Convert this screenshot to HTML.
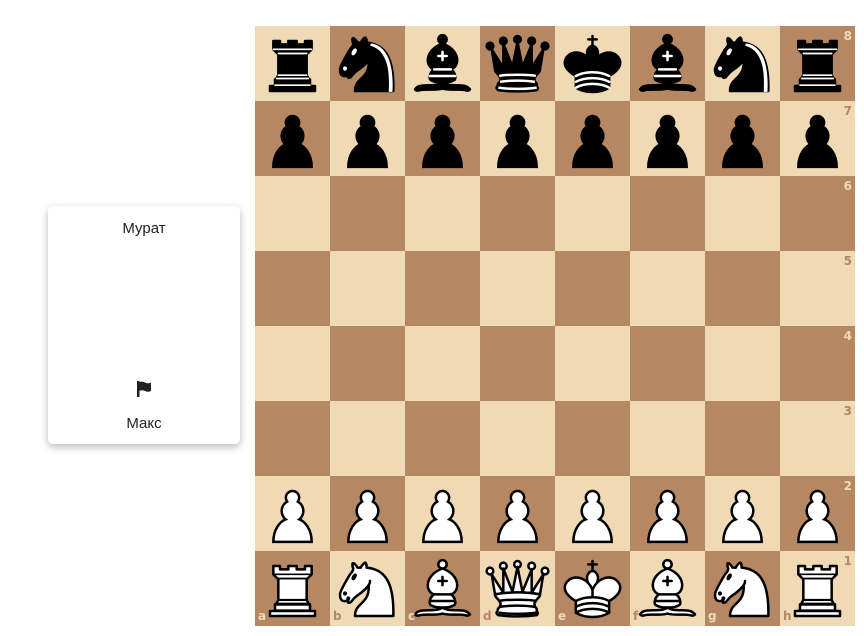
<!DOCTYPE html>
<html><head><meta charset="utf-8"><style>
body{margin:0;width:864px;height:636px;background:#fff;position:relative;overflow:hidden;font-family:"Liberation Sans",sans-serif}
.card{position:absolute;left:48px;top:206px;width:192px;height:238px;background:#fff;border-radius:5px;box-shadow:0 3px 8px rgba(0,0,0,.28)}
.card .n{position:absolute;width:100%;text-align:center;font-size:15px;color:#222}
.board{position:absolute;left:255px;top:26px;width:600px;height:600px;display:grid;grid-template-columns:repeat(8,75px);grid-template-rows:repeat(8,75px)}
.board div{position:relative}
.l{background:#f0d9b5}.d{background:#b58863}
.board svg{position:absolute;left:0;top:0;width:75px;height:75px}
svg.w{fill:#fff;color:#000}svg.b{fill:#000;color:#fff}
.r,.f{position:absolute;font-size:12px;font-weight:bold;font-family:"DejaVu Sans",sans-serif}
.r{right:3px;top:3px}.f{left:3px;bottom:3px}
.l .r,.l .f{color:#b58863}.d .r,.d .f{color:#f0d9b5}
</style></head><body>
<div class="card">
<div class="n" style="top:14px">Мурат</div>
<svg style="position:absolute;left:89px;top:175px" width="14" height="16" viewBox="0 0 14 16"><rect x="0" y="0" width="2.5" height="16" fill="#222"/><path d="M2 1 Q6 0 8 1.5 Q11 3 14 1.5 V10 Q11 11.5 8 10 Q5 8.5 2 10Z" fill="#222"/></svg>
<div class="n" style="top:209px">Макс</div>
</div>
<svg width="0" height="0" style="position:absolute"><defs>
<g id="p" stroke="#000" stroke-width="1.5" stroke-linecap="round"><path d="M22.5 9c-2.21 0-4 1.79-4 4 0 .89.29 1.710.78 2.38C17.33 16.5 16 18.59 16 21c0 2.030.94 3.84 2.41 5.03C15.41 27.09 11 31.58 11 39.5H34c0-7.92-4.41-12.41-7.41-13.47C28.060 24.84 29 23.03 29 21c0-2.41-1.33-4.5-3.28-5.62.49-.67.78-1.49.78-2.38 0-2.21-1.79-4-4-4z"/></g>
<g id="r" stroke="#000" stroke-width="1.5" stroke-linecap="round" stroke-linejoin="round"><path d="M9 39h27v-3H9v3zM12 36v-4h21v4H12zM11 14V9h4v2h5V9h5v2h5V9h4v5" stroke-linecap="butt"/><path d="M34 14l-3 3H14l-3-3"/><path d="M31 17v12.5H14V17" stroke-linecap="butt"/><path d="M31 29.5l1.5 2.5h-20l1.5-2.5"/><path d="M12 35.5h21M13 31.5h19M14 29.5h17M14 16.5h17M11 14h23" fill="none" stroke="currentColor" stroke-width="1"/></g>
<g id="n" stroke="#000" stroke-width="1.5" stroke-linecap="round" stroke-linejoin="round"><path d="M22 10c10.5 1 16.5 8 16 29H15c0-9 10-6.5 8-21"/><path d="M24 18c.38 2.91-5.55 7.37-8 9-3 2-2.82 4.34-5 4-1.042-.94 1.41-3.04 0-3-1 0 .19 1.23-1 2-1 0-4.003 1-4-4 0-2 6-12 6-12s1.89-1.9 2-3.5c-.73-.994-.5-2-.5-3 1-1 3 2.5 3 2.5h2s.78-1.992 2.5-3c1 0 1 3 1 3"/><path d="M9.5 25.5a.5.5 0 1 1-1 0 .5.5 0 1 1 1 0z" fill="currentColor" stroke="currentColor"/><path d="M15 15.5a.5 1.5 0 1 1-1 0 .5 1.5 0 1 1 1 0z" transform="rotate(30 14.5 15.5)" fill="currentColor" stroke="currentColor"/></g>
<path id="mane" d="M24.55 10.4l-.45 1.45.5.15c3.15 1 5.65 2.49 7.9 6.75S35.75 29.06 35.25 39l-.05.5h2.25l.05-.5c.5-10.06-.88-16.85-3.25-21.34-2.37-4.49-5.79-6.64-9.19-7.16l-.51-.1z" fill="#fff"/>
<g id="b" stroke="#000" stroke-width="1.5" stroke-linecap="round" stroke-linejoin="round"><path d="M9 36c3.39-.97 10.11.43 13.5-2 3.39 2.43 10.11 1.03 13.5 2 0 0 1.65.54 3 2-.68.97-1.65.99-3 .5-3.39-.97-10.11.46-13.5-1-3.39 1.46-10.11.03-13.5 1-1.354.49-2.323.47-3-.5 1.354-1.94 3-2 3-2z"/><path d="M15 32c2.5 2.5 12.5 2.5 15 0 .5-1.5 0-2 0-2 0-2.5-2.5-4-2.5-4 5.5-1.5 6-11.5-5-15.5-11 4-10.5 14-5 15.5 0 0-2.5 1.5-2.5 4 0 0-.5.5 0 2z"/><path d="M25 8a2.5 2.5 0 1 1-5 0 2.5 2.5 0 1 1 5 0z"/><path d="M17.5 26h10M15 30h15m-7.5-14.5v5M20 18h5" fill="none" stroke="currentColor"/></g>
<g id="q" stroke="#000" stroke-width="1.5" stroke-linejoin="round"><circle cx="6" cy="12" r="2"/><circle cx="14" cy="9" r="2"/><circle cx="22.5" cy="8" r="2"/><circle cx="31" cy="9" r="2"/><circle cx="39" cy="12" r="2"/><path d="M9 26c8.5-1.5 21-1.5 27 0l2-12-7 11V11l-5.5 13.5-3-15-3 15-5.5-14V25L7 14l2 12z" stroke-linecap="butt"/><path d="M9 26c0 2 1.5 2 2.5 4 1 1.5 1 1 .5 3.5-1.5 1-1.5 2.5-1.5 2.5-1.5 1.5.5 2.5.5 2.5 6.5 1 16.5 1 23 0 0 0 1.5-1 0-2.5 0 0 .5-1.5-1-2.5-.5-2.5-.5-2 .5-3.5 1-2 2.5-2 2.5-4-8.5-1.5-18.5-1.5-27 0z"/><path d="M11.5 30c3.5-1 18.5-1 22 0M12 33.5c6-1 15-1 21 0M11 37c6 1 17 1 23 0" fill="none" stroke="currentColor"/></g>
<g id="k" stroke="#000" stroke-width="1.5" stroke-linecap="round" stroke-linejoin="round"><path d="M22.5 11.63V6M20 8h5" fill="none"/><path d="M22.5 25s4.5-7.5 3-10.5c0 0-1-2.5-3-2.5s-3 2.5-3 2.5c-1.5 3 3 10.5 3 10.5" stroke-linecap="butt"/><path d="M12.5 37c5.5 3.5 14.5 3.5 20 0v-7s9-4.5 6-10.5c-4-6.5-13.5-3.5-16 4V27v-3.5c-2.5-7.5-12-10.5-16-4-3 6 6 10.5 6 10.5v7"/><path d="M12.5 30c5.5-3 14.5-3 20 0m-20 3.5c5.5-3 14.5-3 20 0m-20 3.5c5.5-3 14.5-3 20 0" fill="none" stroke="currentColor"/></g>
</defs></svg>
<div class="board">
<div class="l"><svg class="b" viewBox="0 0 45 45"><use href="#r"/></svg></div><div class="d"><svg class="b" viewBox="0 0 45 45"><use href="#n"/><use href="#mane"/></svg></div><div class="l"><svg class="b" viewBox="0 0 45 45"><use href="#b"/></svg></div><div class="d"><svg class="b" viewBox="0 0 45 45"><use href="#q"/></svg></div><div class="l"><svg class="b" viewBox="0 0 45 45"><use href="#k"/></svg></div><div class="d"><svg class="b" viewBox="0 0 45 45"><use href="#b"/></svg></div><div class="l"><svg class="b" viewBox="0 0 45 45"><use href="#n"/><use href="#mane"/></svg></div><div class="d"><svg class="b" viewBox="0 0 45 45"><use href="#r"/></svg><span class="r">8</span></div>
<div class="d"><svg class="b" viewBox="0 0 45 45"><use href="#p"/></svg></div><div class="l"><svg class="b" viewBox="0 0 45 45"><use href="#p"/></svg></div><div class="d"><svg class="b" viewBox="0 0 45 45"><use href="#p"/></svg></div><div class="l"><svg class="b" viewBox="0 0 45 45"><use href="#p"/></svg></div><div class="d"><svg class="b" viewBox="0 0 45 45"><use href="#p"/></svg></div><div class="l"><svg class="b" viewBox="0 0 45 45"><use href="#p"/></svg></div><div class="d"><svg class="b" viewBox="0 0 45 45"><use href="#p"/></svg></div><div class="l"><svg class="b" viewBox="0 0 45 45"><use href="#p"/></svg><span class="r">7</span></div>
<div class="l"></div><div class="d"></div><div class="l"></div><div class="d"></div><div class="l"></div><div class="d"></div><div class="l"></div><div class="d"><span class="r">6</span></div>
<div class="d"></div><div class="l"></div><div class="d"></div><div class="l"></div><div class="d"></div><div class="l"></div><div class="d"></div><div class="l"><span class="r">5</span></div>
<div class="l"></div><div class="d"></div><div class="l"></div><div class="d"></div><div class="l"></div><div class="d"></div><div class="l"></div><div class="d"><span class="r">4</span></div>
<div class="d"></div><div class="l"></div><div class="d"></div><div class="l"></div><div class="d"></div><div class="l"></div><div class="d"></div><div class="l"><span class="r">3</span></div>
<div class="l"><svg class="w" viewBox="0 0 45 45"><use href="#p"/></svg></div><div class="d"><svg class="w" viewBox="0 0 45 45"><use href="#p"/></svg></div><div class="l"><svg class="w" viewBox="0 0 45 45"><use href="#p"/></svg></div><div class="d"><svg class="w" viewBox="0 0 45 45"><use href="#p"/></svg></div><div class="l"><svg class="w" viewBox="0 0 45 45"><use href="#p"/></svg></div><div class="d"><svg class="w" viewBox="0 0 45 45"><use href="#p"/></svg></div><div class="l"><svg class="w" viewBox="0 0 45 45"><use href="#p"/></svg></div><div class="d"><svg class="w" viewBox="0 0 45 45"><use href="#p"/></svg><span class="r">2</span></div>
<div class="d"><svg class="w" viewBox="0 0 45 45"><use href="#r"/></svg><span class="f">a</span></div><div class="l"><svg class="w" viewBox="0 0 45 45"><use href="#n"/></svg><span class="f">b</span></div><div class="d"><svg class="w" viewBox="0 0 45 45"><use href="#b"/></svg><span class="f">c</span></div><div class="l"><svg class="w" viewBox="0 0 45 45"><use href="#q"/></svg><span class="f">d</span></div><div class="d"><svg class="w" viewBox="0 0 45 45"><use href="#k"/></svg><span class="f">e</span></div><div class="l"><svg class="w" viewBox="0 0 45 45"><use href="#b"/></svg><span class="f">f</span></div><div class="d"><svg class="w" viewBox="0 0 45 45"><use href="#n"/></svg><span class="f">g</span></div><div class="l"><svg class="w" viewBox="0 0 45 45"><use href="#r"/></svg><span class="r">1</span><span class="f">h</span></div>
</div>
</body></html>
